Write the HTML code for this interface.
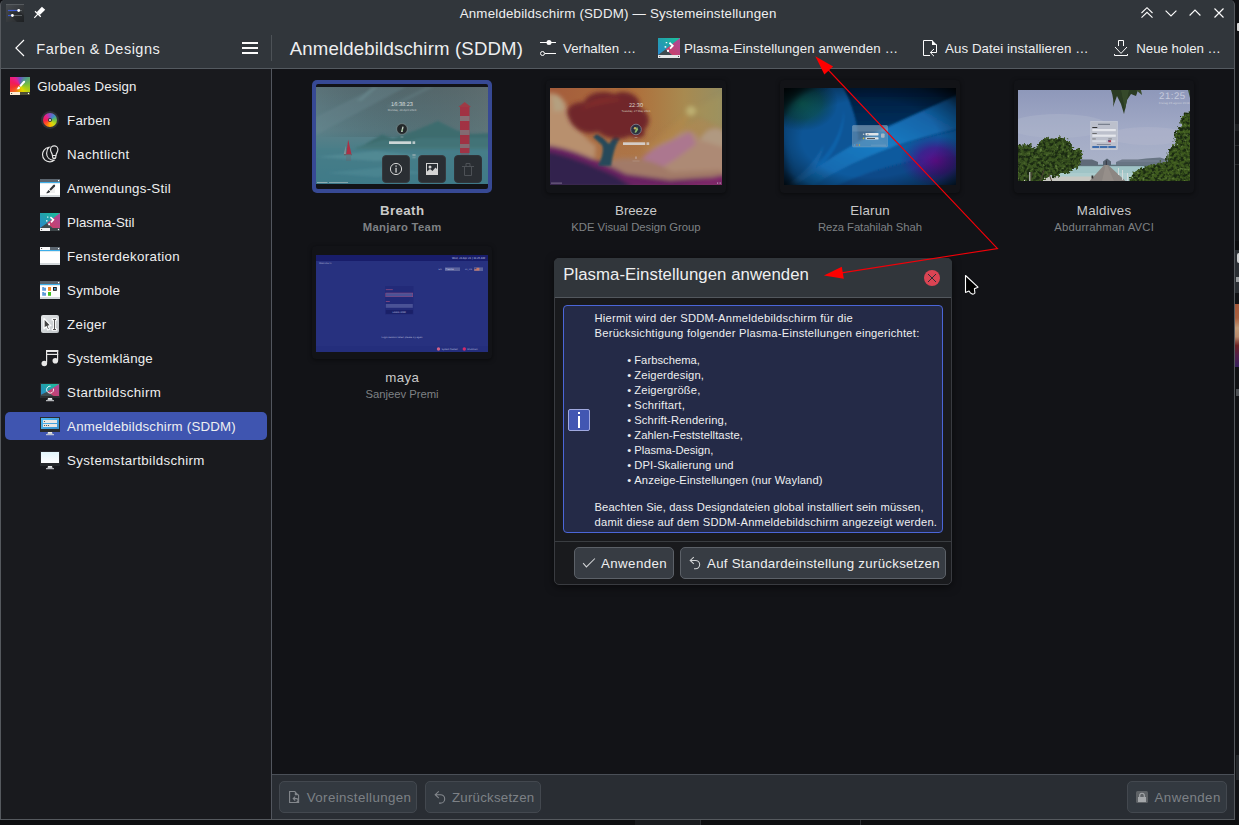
<!DOCTYPE html>
<html lang="de"><head><meta charset="utf-8"><title>Anmeldebildschirm (SDDM) — Systemeinstellungen</title>
<style>
*{margin:0;padding:0;box-sizing:border-box}
html,body{width:1239px;height:825px;overflow:hidden;background:#0e0f12}
body{font-family:"Liberation Sans",sans-serif}
#root{position:absolute;left:0;top:0;width:1239px;height:825px;overflow:hidden}
#root>*{position:absolute}
.a{position:absolute}
.g{position:absolute;left:0;top:0;width:0;height:0}
.t{position:absolute;line-height:20px;white-space:nowrap;font-family:"Liberation Sans",sans-serif}
svg{display:block;overflow:visible}
.btn{border:1px solid #5c6168;background:#373c43;border-radius:5px}
.dbtn{border:1px solid #43484f;background:#333940;border-radius:5px}
.card{background:#121317;border-radius:4px;box-shadow:0 1px 4px rgba(0,0,0,.5)}
svg text{text-rendering:geometricPrecision}

</style></head>
<body>
<div id="root">
<!-- window frame -->
<div id="win" style="left:0;top:0;width:1235px;height:820px;background:#31363b;border-radius:5px 5px 0 0;border:1px solid #55595e;border-top:none"></div>
<!-- sidebar -->
<div id="sidebar" style="left:1px;top:69px;width:270px;height:750px;background:#191a1e"></div>
<!-- content (dimmed by modal) -->
<div id="content" style="left:272px;top:69px;width:962px;height:705px;background:#121317"></div>
<!-- bottom bar -->
<div id="bottombar" style="left:272px;top:774px;width:962px;height:45px;background:#292d33;border-top:1px solid #4a4f57"></div>
<!-- separators -->
<div style="left:1px;top:68px;width:1233px;height:1px;background:#545a60"></div>
<div style="left:271px;top:69px;width:1px;height:750px;background:#52565e"></div>
<div style="left:271px;top:35px;width:1px;height:26px;background:#4d5257"></div>
<!-- selected sidebar item -->
<div style="left:5px;top:412px;width:262px;height:28px;background:#3f55b0;border-radius:5px"></div>
<!-- bottom bar buttons (disabled) -->
<div class="dbtn" style="left:279px;top:781px;width:138px;height:32px"></div>
<div class="dbtn" style="left:425px;top:781px;width:116px;height:32px"></div>
<div class="dbtn" style="left:1127px;top:781px;width:100px;height:32px"></div>

<!-- ===== theme grid cards ===== -->
<div class="card" style="left:546px;top:80px;width:180px;height:113px"></div>
<div class="card" style="left:780px;top:80px;width:180px;height:113px"></div>
<div class="card" style="left:1014px;top:80px;width:180px;height:113px"></div>
<div class="card" style="left:312px;top:246px;width:180px;height:113px"></div>
<!-- selected card (Breath) -->
<div style="left:312px;top:80px;width:180px;height:113px;background:#374994;border-radius:5px"></div>
<div style="left:316px;top:84px;width:172px;height:105px;background:#121317;border-radius:2px"></div>

<!-- Breath preview 172x97 @316,87 -->
<svg style="left:316px;top:87px" width="172" height="97" viewBox="0 0 172 97">
<defs>
<linearGradient id="brSky" x1="0" y1="0" x2="0" y2="1"><stop offset="0" stop-color="#5b7278"/><stop offset=".45" stop-color="#5d8088"/><stop offset=".62" stop-color="#4c7e88"/><stop offset="1" stop-color="#3c7888"/></linearGradient>
<linearGradient id="brR" x1="0" y1="0" x2="1" y2="0"><stop offset="0" stop-color="#000" stop-opacity="0"/><stop offset="1" stop-color="#60605c" stop-opacity=".35"/></linearGradient>
<filter id="b1" x="-10%" y="-10%" width="120%" height="120%"><feGaussianBlur stdDeviation="1.1"/></filter>
<filter id="b07a" x="-20%" y="-10%" width="140%" height="120%"><feGaussianBlur stdDeviation=".75"/></filter>
<filter id="b05" x="-10%" y="-10%" width="120%" height="120%"><feGaussianBlur stdDeviation=".5"/></filter>
<clipPath id="cBr"><rect width="172" height="97"/></clipPath>
</defs>
<g clip-path="url(#cBr)">
<rect width="172" height="97" fill="url(#brSky)"/>
<rect width="172" height="50" fill="url(#brR)"/>
<g filter="url(#b1)">
 <path d="M0 30L60 0H90L0 48Z" fill="#6a8a90" opacity=".35"/><path d="M40 14L56 0H62L46 14Z" fill="#6b8a90" opacity=".5"/><path d="M70 20L110 0H118L78 20Z" fill="#68858a" opacity=".35"/>
 <path d="M46 59L66 47.500L77 51.500L98 44L122 34L141 43.500L156 47L176 46V60H46Z" fill="#3c6c6e"/>
 <path d="M40 60L68 53L84 55L104 51L176 51V63H40Z" fill="#437679" opacity=".8"/>
 <path d="M0 62H172V97H0Z" fill="#3f7c8a" opacity=".5"/>
 <path d="M0 70L60 64L120 70L60 74Z" fill="#5e969e" opacity=".5"/>
 <path d="M10 86L70 80L110 86L60 90Z" fill="#5e969e" opacity=".35"/>
</g>
<g filter="url(#b07a)" opacity=".88">
 <rect x="144" y="20" width="9.5" height="46" fill="#ac2c3c"/>
 <rect x="144" y="29" width="9.5" height="5" fill="#8c7076"/><rect x="144" y="43" width="9.5" height="5" fill="#8c6a72"/><rect x="144" y="57" width="9.5" height="4" fill="#8c6a72"/>
 <path d="M142.5 20L148.7 15L155 20Z" fill="#a83440"/>
 <rect x="144.5" y="66" width="8.5" height="20" fill="#8a4452" opacity=".45"/>
 <path d="M30.200 67L32.200 52.500L35.400 67Z" fill="#b8283c"/><path d="M27.800 67L29.800 58.500V67Z" fill="#a8a0a0" opacity=".7"/>
 <rect x="28" y="67" width="8" height="1.300" fill="#6e5a60"/>
 <rect x="30" y="69" width="5" height="5" fill="#7a4a58" opacity=".25"/>
</g>
<!-- login ui -->
<text x="86" y="18.6" font-size="5.6" fill="#d8dcdc" text-anchor="middle">16:38:23</text>
<text x="86" y="23.6" font-size="2.9" fill="#c4caca" text-anchor="middle">Monday, 29 April 2024</text>
<circle cx="86" cy="42" r="5.4" fill="#23282a" stroke="#8a9a9c" stroke-width=".6"/>
<path d="M85 45L86.4 39.4L87.6 39.8L86.6 45Z" fill="#c8d4c8"/><path d="M85.4 43.6l1.2-1.6.4 1.8z" fill="#6fae5a"/>
<rect x="84.6" y="49.6" width="2.8" height=".8" fill="#aebabc" opacity=".7"/>
<rect x="73" y="54.3" width="22.2" height="2.7" fill="#cdd6d6"/><rect x="96.5" y="54.3" width="2.7" height="2.7" fill="#cdd6d6" opacity=".85"/>
<rect x="96.4" y="67" width="3.2" height="2.2" fill="#a8b6b8" opacity=".6"/><rect x="96.4" y="70.4" width="3.2" height=".8" fill="#a8b6b8" opacity=".5"/>
<rect x="1" y="95" width="10.5" height="1" fill="#b4c2c4" opacity=".7"/><rect x="13" y="95" width="19" height="1" fill="#b4c2c4" opacity=".6"/>
</g>
</svg>
<!-- hover action buttons on Breath -->
<div style="left:382px;top:155px;width:28px;height:28px;background:#2a2e33;border:1px solid #363a3f;border-radius:4px"></div>
<div style="left:418px;top:155px;width:28px;height:28px;background:#2a2e33;border:1px solid #363a3f;border-radius:4px"></div>
<div style="left:454px;top:155px;width:28px;height:28px;background:#2a2e33;border:1px solid #30343a;border-radius:4px"></div>
<svg style="left:382px;top:155px" width="100" height="28" viewBox="0 0 100 28">
<circle cx="14" cy="14" r="5.6" stroke="#d4d4d4" stroke-width="1" fill="none"/><rect x="13.4" y="10.4" width="1.3" height="1.3" fill="#d4d4d4"/><rect x="13.4" y="12.8" width="1.3" height="4.8" fill="#d4d4d4"/>
<rect x="44.5" y="8.5" width="11" height="11" stroke="#d4d4d4" stroke-width="1" fill="none"/><circle cx="48" cy="12" r="1.5" fill="#d4d4d4"/><path d="M45 19V16.5L48 14L50.5 16L53.5 12.5L55 14V19Z" fill="#d4d4d4"/>
<g stroke="#4d5156" stroke-width="1" fill="none"><path d="M80 11.500H92M82.500 11.500V20.500H89.500V11.500M84 11V8.500H88V11"/></g>
</svg>

<!-- Breeze preview 172x97 @550,88 -->
<svg style="left:550px;top:88px" width="172" height="97" viewBox="0 0 172 97">
<defs>
<linearGradient id="bzBg" x1="0" y1="0" x2="1" y2="0"><stop offset="0" stop-color="#a45c3c"/><stop offset=".5" stop-color="#ae703c"/><stop offset=".78" stop-color="#a88a50"/><stop offset="1" stop-color="#968e62"/></linearGradient>
<linearGradient id="bzLow" x1="0" y1="0" x2="0" y2="1"><stop offset="0" stop-color="#a8784e" stop-opacity="0"/><stop offset="1" stop-color="#b08058" stop-opacity=".9"/></linearGradient>
<filter id="b2" x="-20%" y="-20%" width="140%" height="140%"><feGaussianBlur stdDeviation="2.2"/></filter>
<filter id="b15" x="-20%" y="-20%" width="140%" height="140%"><feGaussianBlur stdDeviation="1.3"/></filter>
<clipPath id="cBz"><rect width="172" height="97"/></clipPath>
</defs>
<g clip-path="url(#cBz)">
<rect width="172" height="97" fill="url(#bzBg)"/>
<rect y="30" width="172" height="67" fill="url(#bzLow)"/>
<g filter="url(#b2)">
 <path d="M141 23L172 6V40Z" fill="#a89858" opacity=".35"/>
 <path d="M141 23L92 62L120 66Z" fill="#b88a48" opacity=".4"/>
 <circle cx="141" cy="23" r="5" fill="#c2b878" opacity=".8"/>
 <path d="M112 52L150 30L172 40V97H100Z" fill="#b48a52" opacity=".45"/>
 <path d="M-4 6C8 2 16 12 20 26C28 40 34 50 46 58L44 76L-4 70Z" fill="#b8906e"/>
 <path d="M2 8C10 6 14 14 14 22L4 24Z" fill="#b4a080"/>
 <path d="M96 70C104 54 118 56 126 48C134 40 146 42 150 52C158 36 176 36 178 54V92H100Z" fill="#ad8a74"/>
 <path d="M150 52C156 38 170 38 176 46V60Z" fill="#b09c84" opacity=".8"/>
 <path d="M92 70C104 58 122 54 140 44L146 56C134 64 120 78 100 84Z" fill="#ac7492" opacity=".9"/>
 <path d="M56 74C80 66 104 72 122 84L172 82V100H40Z" fill="#a27a68"/>
 <path d="M-4 57C20 60 48 72 76 86L120 92L176 88V100H-4Z" fill="#6a2462"/>
 <path d="M-4 63C14 66 40 76 66 88L84 100H-4Z" fill="#30204e"/>
 <path d="M128 97L176 86V100Z" fill="#7c2868"/>
</g>
<g filter="url(#b15)">
 <path d="M53 50L59 56L65 47L70 50C65 57 63 66 61 78L48 78C52 70 54 62 52 57L43 49L47 46Z" fill="#264a5a"/>
</g>
<g filter="url(#b2)">
 <path d="M18 28C14 18 26 14 34 14C38 4 54 2 64 6C76 0 92 8 90 20C100 24 102 36 94 42C98 50 86 52 80 48C70 54 54 50 48 44C36 48 22 42 18 28Z" fill="#70262a"/>
 <path d="M30 22C40 10 60 8 74 12C62 14 44 16 30 22Z" fill="#822e2c"/>
</g>
<text x="86" y="19.200" font-size="5.600" fill="#dcd4cc" text-anchor="middle">22:30</text>
<text x="86" y="24.200" font-size="2.900" fill="#cfc4b8" text-anchor="middle">Tuesday, 27 May 2021</text>
<circle cx="86" cy="41.500" r="5.300" fill="#2c3040" stroke="#8e94a4" stroke-width=".7"/>
<path d="M84.500 44.500L87 38.500L88.200 41.500L86 44.800Z" fill="#8ab86a"/><circle cx="85" cy="40.200" r="1.200" fill="#c8b060"/>
<rect x="84.600" y="49.200" width="2.800" height=".8" fill="#cbb" opacity=".6"/>
<rect x="73" y="54.300" width="22.200" height="2.700" fill="#d4ccc6"/><rect x="96.500" y="54.300" width="2.700" height="2.700" fill="#d4ccc6" opacity=".85"/>
<rect x="85" y="68.500" width="2" height="2.400" fill="#cbb" opacity=".45"/><rect x="82.500" y="72.600" width="7" height=".8" fill="#cbb" opacity=".35"/>
<rect x="1" y="94.600" width="11" height="1" fill="#b8a8c0" opacity=".55"/><rect x="167" y="94.300" width="1.200" height="1.600" fill="#c8b8d0" opacity=".6"/><rect x="169.500" y="94.300" width="1.500" height="1.600" fill="#c8b8d0" opacity=".5"/>
</g>
</svg>

<!-- Elarun preview 172x97 @784,88 -->
<svg style="left:784px;top:88px" width="172" height="97" viewBox="0 0 172 97">
<defs>
<radialGradient id="elTeal" cx=".5" cy=".5" r=".5"><stop offset="0" stop-color="#0e6660"/><stop offset=".55" stop-color="#0b4e54" stop-opacity=".8"/><stop offset="1" stop-color="#083a52" stop-opacity="0"/></radialGradient>
<radialGradient id="elPur" cx=".5" cy=".5" r=".5"><stop offset="0" stop-color="#5e0e8a"/><stop offset=".5" stop-color="#46168a" stop-opacity=".8"/><stop offset="1" stop-color="#2a2a88" stop-opacity="0"/></radialGradient>
<radialGradient id="elVig" cx=".5" cy=".52" r=".72"><stop offset=".55" stop-color="#000" stop-opacity="0"/><stop offset=".8" stop-color="#000" stop-opacity=".35"/><stop offset="1" stop-color="#000" stop-opacity=".92"/></radialGradient>
<linearGradient id="elSw" x1="0" y1="1" x2="1" y2="0"><stop offset="0" stop-color="#0e5ea2"/><stop offset=".5" stop-color="#1a7cc4"/><stop offset="1" stop-color="#0c4e8e"/></linearGradient>
<linearGradient id="elTop" x1="0" y1="0" x2="0" y2="1"><stop offset="0" stop-color="#021a38"/><stop offset="1" stop-color="#06386c"/></linearGradient>
<filter id="b08" x="-10%" y="-10%" width="120%" height="120%"><feGaussianBlur stdDeviation=".8"/></filter>
<filter id="b3" x="-20%" y="-20%" width="140%" height="140%"><feGaussianBlur stdDeviation="3"/></filter>
<clipPath id="cEl"><rect width="172" height="97"/></clipPath>
</defs>
<g clip-path="url(#cEl)">
<rect width="172" height="97" fill="#0a4c8c"/>
<g filter="url(#b08)">
 <path d="M58 -2H176V6C150 18 124 30 104 38C92 43 82 49 74 54C74 36 68 16 58 -2Z" fill="url(#elTop)"/>
 <path d="M6 99C30 80 56 64 74 54C92 44 124 30 176 6V40C150 46 120 54 96 64C70 74 44 88 28 99Z" fill="url(#elSw)"/>
 <path d="M28 99C50 84 76 72 100 63C126 54 150 48 176 42V68C140 68 100 76 50 99Z" fill="#0d5a9e"/>
 <path d="M50 99C96 78 140 70 176 69V99Z" fill="#0a4888"/>
 <path d="M-2 30L48 -2H58C68 16 74 36 74 54C52 66 26 82 6 99H-2Z" fill="#0c5496"/>
 <path d="M-2 99C30 86 58 56 60 20C62 56 40 84 6 99Z" fill="#1468b0" opacity=".7"/>
 <path d="M-2 99C14 90 30 76 40 56C36 80 22 92 6 99Z" fill="#1a70b4" opacity=".5"/>
</g>
<ellipse cx="18" cy="15" rx="36" ry="28" fill="url(#elTeal)"/>
<ellipse cx="152" cy="73" rx="36" ry="26" fill="url(#elPur)"/>
<rect width="172" height="97" fill="url(#elVig)"/>
<path d="M-6 -6H40C20 0 6 10 -6 40Z" fill="#000" opacity=".55" filter="url(#b3)"/>
<path d="M-6 40C0 60 2 80 12 103H-6Z" fill="#000" opacity=".4" filter="url(#b3)"/>
<!-- login box -->
<rect x="68.500" y="37.500" width="35" height="21.500" rx="1" fill="#7a9ab6" opacity=".55"/>
<rect x="68.500" y="37.500" width="35" height="21.500" rx="1" fill="none" stroke="#9ab4cc" stroke-width=".5" opacity=".6"/>
<rect x="68.500" y="37.500" width="35" height="6" fill="#a0b8cc" opacity=".25"/>
<rect x="81.500" y="45" width="13" height="2.400" rx=".6" fill="#dfe4e8"/><rect x="81.500" y="49.200" width="13" height="2.400" rx=".6" fill="#dfe4e8"/>
<rect x="83" y="50" width="8" height=".8" fill="#333"/><rect x="83" y="45.900" width="1.600" height=".6" fill="#555"/>
<rect x="97" y="45.500" width="3.600" height="4.200" rx=".8" fill="#a8b6c4"/>
<circle cx="79.600" cy="46.200" r=".8" fill="#c8d0d8"/><circle cx="79.600" cy="50.400" r=".8" fill="#d0b838"/>
<circle cx="70.500" cy="57" r=".7" fill="#60a0d0"/><circle cx="73" cy="57" r=".7" fill="#c06a50"/><circle cx="75.500" cy="57" r=".7" fill="#c0b040"/>
<rect x="87" y="56.800" width="15" height=".6" fill="#a8c0d4" opacity=".5"/>
</g>
</svg>

<!-- Maldives preview 172x91 @1018,90 -->
<svg style="left:1018px;top:90px" width="172" height="91" viewBox="0 0 172 91">
<defs>
<linearGradient id="mdSky" x1="0" y1="0" x2="0" y2="1"><stop offset="0" stop-color="#8e98ba"/><stop offset=".45" stop-color="#a2aac6"/><stop offset=".8" stop-color="#aab2c8"/><stop offset="1" stop-color="#a8b6c4"/></linearGradient>
<filter id="b07" x="-10%" y="-10%" width="120%" height="120%"><feGaussianBlur stdDeviation=".6"/></filter>
<filter id="leaf" x="-5%" y="-5%" width="110%" height="110%" color-interpolation-filters="sRGB">
 <feTurbulence type="fractalNoise" baseFrequency=".32" numOctaves="2" seed="7" result="n"/>
 <feDisplacementMap in="SourceGraphic" in2="n" scale="7" xChannelSelector="R" yChannelSelector="G" result="sh"/>
 <feColorMatrix in="n" type="matrix" values="0 0 0 0 .1  0 0 0 0 .16  0 0 0 0 .07  4 0 0 0 -1.7" result="dk"/>
 <feComposite in="dk" in2="sh" operator="in" result="dkin"/>
 <feColorMatrix in="n" type="matrix" values="0 0 0 0 .4  0 0 0 0 .52  0 0 0 0 .25  0 3.2 0 0 -1.9" result="lt"/>
 <feComposite in="lt" in2="sh" operator="in" result="ltin"/>
 <feMerge result="m"><feMergeNode in="sh"/><feMergeNode in="dkin"/><feMergeNode in="ltin"/></feMerge>
 <feGaussianBlur in="m" stdDeviation=".45"/>
</filter>
<clipPath id="cMd"><rect width="172" height="91"/></clipPath>
</defs>
<g clip-path="url(#cMd)">
<rect width="172" height="91" fill="url(#mdSky)"/>
<g filter="url(#b07)">
 <ellipse cx="40" cy="36" rx="50" ry="12" fill="#b0b6cc" opacity=".45"/>
 <ellipse cx="130" cy="46" rx="40" ry="9" fill="#b4bace" opacity=".4"/>
 <!-- sea and sand -->
 <rect x="40" y="75" width="100" height="16" fill="#a0c4c6"/>
 <rect x="40" y="83" width="100" height="8" fill="#b0d0d0" opacity=".7"/>
 <rect x="40" y="74.200" width="100" height="2" fill="#86a4ae"/>
 <path d="M0 86.500H78L74 91H0Z" fill="#c8c8c2"/>
 <!-- distant villas -->
 <path d="M56 72L60 69.500H74L80 72V75H56Z" fill="#5e6a78"/><path d="M85 71.500L89 68.500L93 71.500V75H85Z" fill="#566270"/>
 <path d="M98 72L104 69.500H120L128 68.500L142 67.500L150 70V75H98Z" fill="#687484"/>
 <path d="M100 71H148" stroke="#8a96a4" stroke-width=".8" opacity=".7"/>
 <rect x="58" y="75" width="84" height="1.100" fill="#4e5a64" opacity=".7"/>
 <!-- pier -->
 <path d="M86.200 75H90.200L107.500 91H71.500Z" fill="#8c8682"/>
 <path d="M87.600 75H89L96 91H84Z" fill="#9c9690" opacity=".6"/>
 <rect x="87.800" y="70.500" width="1" height="4.500" fill="#34363c"/>
 <path d="M104.500 80V90M109.500 83V91M100.500 78V85" stroke="#d8dcdc" stroke-width=".9"/>
 <rect x="73.500" y="85.500" width="1.800" height="3" fill="#333"/>
</g>
<!-- trees -->
<g filter="url(#leaf)">
 <path d="M-4 58C4 52 12 54 18 58C20 50 30 46 38 48C46 46 56 52 54 60C60 60 66 62 63 68C64 74 60 80 54 79L50 84L42 82L40 88L30 86L24 92H-4Z" fill="#3a5420"/>
 <path d="M56 62C58 56 66 58 64 66Z" fill="#3a5420"/>
 <path d="M176 20C166 22 160 28 163 35C157 40 155 48 158 54C150 58 148 66 150 72C140 72 128 76 120 80C114 83 110 88 112 93H176Z" fill="#3e5a1e"/>
</g>
<g filter="url(#b07)">
 <path d="M22 92L26 80M12 92L14 82M34 92L31 84" stroke="#4a4234" stroke-width="1" fill="none"/>
 <rect x="11" y="82" width="1.400" height="9" fill="#a8aca8"/>
 <!-- palm -->
 <path d="M93 0C95 6 96 12 95 17L99 6L103 14L106 24L109 10L113 4L118 6L120 0Z" fill="#2a3a20"/>
 <path d="M103 0L107 20L111 0Z" fill="#34482a"/><path d="M118 0L124 5L123 0Z" fill="#3a4c2c"/>
 <path d="M170 0L172 8V0Z" fill="#34482a"/>
</g>
<!-- login box -->
<rect x="72.800" y="31.500" width="26.500" height="28" fill="#bcc0cc" stroke="#d4d8e0" stroke-width=".5"/>
<rect x="80" y="33.800" width="12" height="1" fill="#555c6c" opacity=".8"/>
<rect x="74.300" y="37" width="5" height=".9" fill="#222"/><rect x="74.300" y="39" width="23.500" height="2.200" fill="#e4e6ec"/>
<rect x="74.300" y="43" width="4.500" height=".8" fill="#555"/><rect x="74.300" y="44.600" width="23.500" height="2.200" fill="#e4e6ec"/>
<rect x="74.300" y="48.600" width="3.500" height=".7" fill="#666"/><rect x="90.300" y="48.600" width="3.500" height=".7" fill="#666"/>
<rect x="74.300" y="50.200" width="14" height="2" fill="#d4d8e0"/><rect x="90.300" y="50.200" width="2.800" height="2" fill="#b03a4a"/><rect x="90.300" y="50.200" width="1.200" height="1" fill="#2c3c8c"/><rect x="93.300" y="50.200" width="4" height="2" fill="#d4d8e0"/>
<rect x="78.800" y="54" width="14" height=".7" fill="#4c5468" opacity=".7"/>
<rect x="74.300" y="56" width="7" height="2" fill="#3c6cac"/><rect x="82" y="56" width="7.500" height="2" fill="#3c6cac"/><rect x="90.300" y="56" width="7.500" height="2" fill="#3c6cac"/>
<text x="167.600" y="8.800" font-size="9.600" fill="#c6cbdc" text-anchor="end" letter-spacing=".5">21:25</text>
<text x="171.500" y="14" font-size="3" fill="#c8ccd8" text-anchor="end">Freitag 23 agosto 2019</text>
</g>
</svg>

<!-- maya preview 172x97 @316,255 -->
<svg style="left:316px;top:255px" width="172" height="97" viewBox="0 0 172 97">
<rect width="172" height="97" fill="#27317f"/>
<rect width="172" height="6" fill="#181d6a"/>
<rect y="91" width="172" height="6" fill="#242e7c"/>
<text x="169" y="3.600" font-size="2.800" fill="#c4c8e4" text-anchor="end">Wed, 21 Apr 21 | 11:25 AM</text>
<text x="3" y="9.200" font-size="2.400" fill="#b0b4d8">Welcome to</text>
<text x="122.500" y="15.200" font-size="2.300" fill="#aab0d8">EN</text>
<rect x="129" y="12.400" width="15" height="3.600" fill="#5a629c"/><text x="129.600" y="15.200" font-size="2.400" fill="#d0d4ec">Plasma</text>
<text x="149" y="15.200" font-size="2.300" fill="#aab0d8">en_US</text>
<rect x="158" y="12.400" width="9" height="3.600" fill="#5a629c"/><rect x="158.400" y="12.800" width="5" height="2.800" fill="#c87868"/><rect x="158.400" y="12.800" width="2" height="1.400" fill="#384890"/>
<rect x="69" y="31" width="28.500" height="28.500" fill="#222a78"/>
<rect x="69.800" y="34.400" width="7" height=".7" fill="#a05080"/>
<rect x="69.800" y="38" width="27" height="3.800" fill="#4a5296" stroke="#b04a78" stroke-width=".4"/>
<rect x="69.800" y="46.200" width="4" height=".7" fill="#a05080"/>
<rect x="69.800" y="49" width="27" height="3.800" fill="#4a5296"/>
<rect x="69.800" y="55" width="27" height="3.800" fill="#1a2068"/><text x="83.300" y="57.800" font-size="2.200" fill="#c0c4e0" text-anchor="middle">LOGIN HERE</text>
<text x="86" y="83.200" font-size="2.500" fill="#b4b8dc" text-anchor="middle">Login session failed, please try again</text>
<circle cx="122.500" cy="94" r="1.700" fill="#d06088"/><text x="125.400" y="94.800" font-size="2.400" fill="#b4b8dc">System Restart</text>
<circle cx="148.300" cy="94" r="1.700" fill="#d02a6a"/><text x="151" y="94.800" font-size="2.400" fill="#b4b8dc">Shutdown</text>
</svg>

<!-- modal dialog -->
<div id="dialog" style="left:554px;top:258px;width:398px;height:327px;background:#191a1d;border:1px solid #393b40;border-radius:5px;box-shadow:0 2px 8px rgba(0,0,0,.5)"></div>
<div style="left:554px;top:258px;width:398px;height:39px;background:#31363b;border-radius:5px 5px 0 0"></div>
<div style="left:555px;top:297px;width:396px;height:1px;background:#53585e"></div>
<div style="left:555px;top:541px;width:396px;height:1px;background:#3a3d41"></div>
<!-- inline message -->
<div style="left:563px;top:305px;width:380px;height:228px;background:#242a47;border:1px solid #4b66d8;border-radius:4px"></div>
<!-- info icon -->
<div style="left:568px;top:409px;width:22px;height:22px;background:#4257b2;border:1px solid #a0a9e0;border-radius:2px"></div>
<div style="left:578px;top:412px;width:2px;height:2px;background:#fff"></div>
<div style="left:578px;top:416px;width:2px;height:12px;background:#fff"></div>
<!-- close button -->
<svg style="left:924px;top:270px" width="16" height="16" viewBox="0 0 16 16"><circle cx="8" cy="8" r="8" fill="#da4453"/><path d="M4 4l8 8M12 4l-8 8" stroke="#2c3036" stroke-width="1" fill="none"/></svg>
<!-- buttons -->
<div class="btn" style="left:574px;top:547px;width:100px;height:32px"></div>
<div class="btn" style="left:680px;top:547px;width:266px;height:32px"></div>

<!-- conic gradient icons (CSS) -->
<div style="left:10px;top:77px;width:20px;height:15px;background:conic-gradient(from 0deg at 50% 55%,#6f50c4 0deg,#4f9a8c 40deg,#6fb84a 75deg,#a4cc1c 110deg,#dcd800 150deg,#e8b400 185deg,#f0701c 215deg,#f23030 255deg,#f01a5c 290deg,#e8208c 325deg,#6f50c4 360deg)"></div>
<div style="left:10px;top:92px;width:10px;height:3px;background:#fdebd2"></div>
<div style="left:20px;top:92px;width:10px;height:3px;background:#4e4e36"></div>
<div style="left:41px;top:111px;width:18px;height:18px;border-radius:50%;background:#2f3236"></div>
<div style="left:43px;top:113px;width:14px;height:14px;border-radius:50%;background:conic-gradient(#8452c4 0deg,#3c8cc4 45deg,#5cb860 80deg,#8cc832 105deg,#d0dc10 140deg,#ffb400 180deg,#ff5a1e 225deg,#f4204c 265deg,#e6208c 315deg,#8452c4 360deg)"></div>
<div style="left:47.7px;top:117.7px;width:4.6px;height:4.6px;border-radius:50%;background:#33363b"></div>
<div style="left:49px;top:119.2px;width:2px;height:1.8px;border-radius:40%;background:#d8d8dc"></div>

<svg id="ico" style="left:0;top:0" width="1239" height="825" viewBox="0 0 1239 825">
<defs>
<linearGradient id="gTeal" x1="1" y1="0" x2="0" y2="1"><stop offset="0" stop-color="#1bc49a"/><stop offset=".5" stop-color="#22a0ac"/><stop offset="1" stop-color="#2a8ad0"/></linearGradient>
<linearGradient id="gMag" x1="1" y1="0" x2="0" y2="1"><stop offset="0" stop-color="#ab4a9c"/><stop offset="1" stop-color="#d03e5c"/></linearGradient>
<linearGradient id="gApp" x1="0" y1="0" x2="1" y2="1"><stop offset="0" stop-color="#484c50"/><stop offset="1" stop-color="#26292c"/></linearGradient>
<linearGradient id="gSky" x1="0" y1="0" x2="1" y2="1"><stop offset="0" stop-color="#52bdf8"/><stop offset="1" stop-color="#3890cc"/></linearGradient>
<linearGradient id="gScr" x1="0" y1="0" x2="0" y2="1"><stop offset="0" stop-color="#e2f6fc"/><stop offset="1" stop-color="#ffffff"/></linearGradient>
<linearGradient id="gCur" x1="0" y1="0" x2="1" y2="1"><stop offset="0" stop-color="#e2e5e7"/><stop offset="1" stop-color="#bfc4c7"/></linearGradient>
<linearGradient id="gStand" x1="0" y1="0" x2="0" y2="1"><stop offset="0" stop-color="#f4f5f5"/><stop offset="1" stop-color="#b9bdc0"/></linearGradient>
<!-- plasma style glyph, 20x18 box -->
<g id="plasma20">
 <rect x="0" y="0" width="20" height="15" fill="url(#gTeal)"/>
 <path d="M20 0V15H12.6L6.8 10.2Z" fill="url(#gMag)"/>
 <path d="M0 15L6.8 10.2L12.6 15Z" fill="#3f4b4f"/>
 <path d="M10.4 4.2L13.4 6.8L11 9.4" stroke="#fff" stroke-width="1.6" fill="none"/>
 <rect x="7" y="3.6" width="1.4" height="1" fill="#fff"/><rect x="6" y="7.2" width="1.5" height="1.3" fill="#fff"/><rect x="8.2" y="10.4" width="1.8" height="1.8" fill="#fff"/>
</g>
<g id="stand"><path d="M8 0h4l.6 2.2h-5.2z" fill="url(#gStand)"/><rect x="6" y="2.2" width="8" height="1" fill="#d5d8da"/></g>
<g id="winframe">
 <rect x="0" y="0" width="20" height="18" fill="#fff"/>
 <rect x="0" y="0" width="20" height="3" fill="#5b656f"/>
 <rect x="0" y="3" width="20" height="1.3" fill="#3daee9"/>
 <rect x="0" y="4.3" width="20" height=".6" fill="#f3ece8"/>
 <rect x="0" y="16" width="20" height="2" fill="#d3d8db"/>
 <rect x="18" y="1" width="1.2" height="1.2" fill="#fff"/>
</g>
</defs>

<!-- titlebar: app icon -->
<rect x="6" y="4" width="18" height="18" fill="url(#gApp)"/>
<rect x="6" y="4" width="18" height="1" fill="#5d6165" opacity=".8"/>
<path d="M18.700 10.500L24 15.800V22H17L10 15.500H12.400L9 12Z" fill="#000" opacity=".2"/>
<path d="M8 10.5H18" stroke="#3c59d0" stroke-width="1.2"/><path d="M19.5 10.5H22" stroke="#6a6e72" stroke-width=".8"/>
<path d="M8 15.5H12" stroke="#3c59d0" stroke-width="1.2"/><path d="M13 15.5H22" stroke="#6a6e72" stroke-width=".8"/>
<circle cx="18.7" cy="10.5" r="1.4" fill="#fff"/><circle cx="12.4" cy="15.5" r="1.4" fill="#fff"/>
<!-- pin -->
<path d="M41.9 6.7L45.2 9.7L39.8 15L36.7 12.2Z" fill="#fff"/>
<path d="M35 11.3L40.8 16.7M37.8 14.2L34.3 17.8" stroke="#fff" stroke-width="1.2" fill="none"/>
<!-- window buttons -->
<g stroke="#fcfcfc" stroke-width="1.15" fill="none">
<path d="M1141.5 13L1147 7.7L1152.5 13M1141.5 17.6L1147 12.3L1152.5 17.6"/>
<path d="M1165.6 10.6L1171 16L1176.4 10.6"/>
<path d="M1189.6 15.5L1195 10.1L1200.4 15.5"/>
<path d="M1214.5 8.5L1223.5 17.5M1223.5 8.5L1214.5 17.5"/>
<!-- back chevron -->
<path d="M24 40L15.9 48L24 56"/>
</g>
<!-- hamburger -->
<rect x="242" y="42" width="16" height="2" fill="#fcfcfc"/><rect x="242" y="47" width="16" height="2" fill="#fcfcfc"/><rect x="242" y="52" width="16" height="2" fill="#fcfcfc"/>
<!-- toolbar: Verhalten (configure) -->
<g stroke="#fcfcfc" stroke-width="1" fill="none">
<path d="M540 42.5H556M545 53.5H556"/><circle cx="542.5" cy="53.5" r="2"/>
</g>
<circle cx="549" cy="42.5" r="2.5" fill="#fcfcfc"/>
<!-- toolbar: plasma icon 22x20 -->
<g transform="translate(658 38) scale(1.1 1.1333)"><use href="#plasma20"/></g>
<rect x="658" y="55" width="22" height="3" fill="#e4e7e8"/><rect x="659.2" y="56" width="1" height="1" fill="#555"/><rect x="678" y="56" width="1" height="1" fill="#444"/>
<!-- toolbar: install from file -->
<g stroke="#fcfcfc" stroke-width="1" fill="none">
<path d="M930 55.5H923.5V40.5H932.5"/><path d="M936.5 44.5V52.5H930.5"/><path d="M934 49L930.3 52.5L934 56.2"/>
</g>
<path d="M932 40L937 45H932Z" fill="#fcfcfc"/>
<!-- toolbar: get new -->
<g stroke="#fcfcfc" stroke-width="1" fill="none">
<path d="M1118.5 46V40.5H1123.5V46"/><path d="M1115 47L1121 53.4L1127 47"/><path d="M1114.5 54V55.5H1127.5V54"/>
</g>

<!-- sidebar: Globales Design brush + dots -->
<path d="M16.400 89C17.600 88.700 17.500 87.200 18.700 86.200L20.300 87.700C19.400 89.200 17.800 89.500 16.400 89Z" fill="#fff"/><path d="M19.400 85.500L23.400 81.100Q24.300 80.400 24.900 81.100Q25.400 81.800 24.800 82.500L20.800 86.900Z" fill="#fff"/>
<circle cx="11.6" cy="93.5" r=".6" fill="#333"/><circle cx="28.5" cy="93.5" r=".7" fill="#fff"/>
<!-- Nachtlicht -->
<g stroke="#e6e6e6" stroke-width="1.150" fill="none">
<path d="M49 147.3C44.5 148 42.5 151.6 42.5 154.5C42.5 159 46 161.8 49.8 161.8C51.5 161.8 53 161.3 54 160.4C49.5 160 46.6 157 46.6 153.2C46.6 150.5 47.5 148.6 49 147.3Z"/>
<path d="M52.4 155.5C52.4 153.4 50.5 152.2 50.5 149.5A3.7 3.7 0 0 1 57.9 149.5C57.9 152.2 56 153.4 56 155.5Z"/>
<path d="M52.6 155.5V157.3Q52.6 158.6 54.2 158.6Q55.8 158.6 55.8 157.3V155.5"/>
</g>
<path d="M53.2 157.6H55.2V158.4H53.2Z" fill="#e6e6e6"/>
<!-- Anwendungs-Stil -->
<g transform="translate(40 179)"><use href="#winframe"/>
<path d="M6 14C7.400 13.700 7.300 12 8.600 11L10.200 12.600C9.300 14.200 7.500 14.600 6 14Z" fill="#303438"/><path d="M9.300 10.200L13.300 5.900Q14.200 5.200 14.900 5.900Q15.500 6.600 14.900 7.400L10.800 11.700Z" fill="#303438"/><path d="M11 12L15 8V14H9Z" fill="#000" opacity=".06"/></g>
<!-- Plasma-Stil -->
<g transform="translate(40 213)"><use href="#plasma20"/><rect x="0" y="15" width="10" height="3" fill="#f2f2f2"/><rect x="10" y="15" width="10" height="3" fill="#3d4548"/><circle cx="1.6" cy="16.5" r=".6" fill="#333"/><circle cx="18.5" cy="16.5" r=".7" fill="#fff"/></g>
<!-- Fensterdekoration -->
<g transform="translate(40 247)"><use href="#winframe"/><rect x="0" y="0" width="10" height="3" fill="#fbfbfb"/><circle cx="1.6" cy="1.5" r=".6" fill="#333"/></g>
<!-- Symbole -->
<g transform="translate(40 281)"><use href="#winframe"/>
<path d="M2.2 6h1.6l.6.8h1.6v3H2.2z" fill="#5c9bd8"/><path d="M2.2 11h1.6l.6.8h1.6v3H2.2z" fill="#5c9bd8"/>
<rect x="8" y="6" width="3" height="3.8" fill="#f67400" opacity=".85"/><rect x="8" y="11" width="3" height="3.8" fill="#3fbf1f"/>
<rect x="13" y="6" width="3.8" height="3.8" fill="#1d1d1d"/><rect x="14" y="7" width="1.8" height="1.8" fill="#4aa0d8"/></g>
<!-- Zeiger -->
<rect x="41" y="315" width="18" height="18" rx="2" fill="url(#gCur)"/>
<path d="M44 318.400V328.800L46.300 326.800L47.800 330L49.600 329.200L48.200 326.100L50.900 325.600Z" fill="#444" stroke="#fff" stroke-width="1.300" stroke-linejoin="round"/>
<path d="M52.8 319.5H56.2M54.5 319.5V329.5M52.8 329.5H56.2" stroke="#fff" stroke-width="2.6" stroke-linecap="round" fill="none"/>
<path d="M53 319.5H56M54.5 319.5V329.5M53 329.5H56" stroke="#454545" stroke-width=".9" fill="none"/>
<!-- Systemklaenge -->
<g fill="#e8e8e8"><rect x="46" y="350" width="12.2" height="2"/><rect x="46" y="353.8" width="12.2" height="1.2"/><rect x="46" y="350" width="1.2" height="12.6"/><rect x="57" y="350" width="1.2" height="10.5"/><circle cx="44.3" cy="363.5" r="2.8"/><circle cx="55.3" cy="360.8" r="2.8"/></g>
<!-- Startbildschirm -->
<rect x="40" y="383" width="20" height="15" fill="#2a2d30"/>
<g transform="translate(41 384) scale(.9 .8)"><rect x="0" y="0" width="20" height="15" fill="url(#gTeal)"/><path d="M20 0V15H13L6.8 9.8Z" fill="url(#gMag)"/><path d="M0 13.5L6.8 9.8L14 15H0Z" fill="#3f4b4f"/></g>
<path d="M50.6 386.2A3.5 3.5 0 1 0 53.4 388.6" stroke="#fff" stroke-width=".9" fill="none"/>
<g transform="translate(40 398)"><use href="#stand"/></g>
<!-- Anmeldebildschirm -->
<rect x="40" y="417" width="20" height="15" fill="#2a2c2e"/><rect x="41" y="418" width="18" height="11" fill="url(#gSky)"/>
<rect x="43" y="420" width="14" height="3" fill="#e8e8e6"/><rect x="43" y="424" width="14" height="3" fill="#e8e8e6"/>
<circle cx="44.5" cy="421.5" r=".6" fill="#444"/><circle cx="44.5" cy="425.5" r=".6" fill="#444"/><circle cx="46.5" cy="425.5" r=".6" fill="#444"/><circle cx="48.5" cy="425.5" r=".6" fill="#444"/>
<g transform="translate(40 432)"><use href="#stand"/></g>
<!-- Systemstartbildschirm -->
<rect x="40" y="451" width="20" height="15" fill="#26292c"/><rect x="41" y="452" width="18" height="11" fill="url(#gScr)"/>
<g transform="translate(40 466)"><use href="#stand"/></g>

<!-- dialog button icons -->
<g stroke="#d2d4d6" stroke-width="1.050" fill="none">
<path d="M583.100 563.200L586.400 566.900L594.900 558.500"/>
<path d="M693.800 557.100L690.200 560.400L693.800 563.900M690.200 560.400H695.500A4.200 4.200 0 0 1 695.500 568.800H694"/>
</g>
<!-- bottom bar icons (disabled) -->
<g stroke="#84888d" stroke-width="1.100" fill="none">
<path d="M438.800 791.400L435.200 794.700L438.800 798.200M435.200 794.700H440.500A4.200 4.200 0 0 1 440.500 803.100H439"/>
<path d="M295.300 791.500H289.600V802.500H298.600V794.800"/>
<path d="M295.200 796.600L293.200 798.600L295.200 800.600M293.200 798.600H296.400A1.700 1.700 0 0 1 296.400 802"/>
</g>
<path d="M294.800 790.900L299.200 795.300H294.800Z" fill="#84888d"/>
<rect x="1136" y="791" width="12" height="12" rx="1.500" fill="#5e6266"/>
<rect x="1138" y="797" width="8" height="5" fill="#a4a7aa"/>
<path d="M1139.700 797V795.600A2.300 2.300 0 0 1 1144.300 795.600V797" stroke="#a4a7aa" stroke-width="1.100" fill="none"/>
</svg>

<!-- text -->
<header id="titlebar-text" class="g">
<span class="t" style="left:459.70px;top:4px;font-size:13.3px;color:#eeeff0;letter-spacing:0.204px;">Anmeldebildschirm (SDDM) — Systemeinstellungen</span>
</header>
<div id="toolbar-text" class="g">
<span class="t" style="left:36.30px;top:39px;font-size:14.5px;color:#eeeff0;letter-spacing:0.490px;">Farben &amp; Designs</span>
<span class="t" style="left:289.80px;top:39px;font-size:18.6px;color:#eeeff0;letter-spacing:0.163px;">Anmeldebildschirm (SDDM)</span>
<span class="t" style="left:563.00px;top:39px;font-size:13.3px;color:#eeeff0;letter-spacing:-0.010px;">Verhalten …</span>
<span class="t" style="left:684.00px;top:39px;font-size:13.3px;color:#eeeff0;letter-spacing:0.110px;">Plasma-Einstellungen anwenden …</span>
<span class="t" style="left:945.00px;top:39px;font-size:13.3px;color:#eeeff0;letter-spacing:0.068px;">Aus Datei installieren …</span>
<span class="t" style="left:1136.20px;top:39px;font-size:13.3px;color:#eeeff0;letter-spacing:-0.025px;">Neue holen …</span>
</div>
<nav id="sidebar-text" class="g">
<span class="t" style="left:37.20px;top:77px;font-size:13.3px;color:#eeeff0;letter-spacing:0.122px;">Globales Design</span>
<span class="t" style="left:67.10px;top:111px;font-size:13.3px;color:#eeeff0;letter-spacing:0.177px;">Farben</span>
<span class="t" style="left:67.10px;top:145px;font-size:13.3px;color:#eeeff0;letter-spacing:0.422px;">Nachtlicht</span>
<span class="t" style="left:67.10px;top:179px;font-size:13.3px;color:#eeeff0;letter-spacing:0.269px;">Anwendungs-Stil</span>
<span class="t" style="left:67.10px;top:213px;font-size:13.3px;color:#eeeff0;letter-spacing:0.006px;">Plasma-Stil</span>
<span class="t" style="left:67.10px;top:247px;font-size:13.3px;color:#eeeff0;letter-spacing:0.340px;">Fensterdekoration</span>
<span class="t" style="left:67.10px;top:281px;font-size:13.3px;color:#eeeff0;letter-spacing:0.175px;">Symbole</span>
<span class="t" style="left:67.10px;top:315px;font-size:13.3px;color:#eeeff0;letter-spacing:0.271px;">Zeiger</span>
<span class="t" style="left:67.10px;top:349px;font-size:13.3px;color:#eeeff0;letter-spacing:0.193px;">Systemklänge</span>
<span class="t" style="left:67.10px;top:383px;font-size:13.3px;color:#eeeff0;letter-spacing:0.420px;">Startbildschirm</span>
<span class="t" style="left:67.10px;top:417px;font-size:13.3px;color:#eeeff0;letter-spacing:0.202px;">Anmeldebildschirm (SDDM)</span>
<span class="t" style="left:67.10px;top:451px;font-size:13.3px;color:#eeeff0;letter-spacing:0.365px;">Systemstartbildschirm</span>
</nav>
<main id="grid-text" class="g">
<span class="t" style="left:379.95px;top:201px;font-size:13.3px;color:#c9c9c9;letter-spacing:0.395px;font-weight:700;">Breath</span>
<span class="t" style="left:362.82px;top:217px;font-size:11.3px;color:#7e8184;letter-spacing:0.295px;font-weight:700;">Manjaro Team</span>
<span class="t" style="left:615.10px;top:201px;font-size:13.3px;color:#c9c9c9;letter-spacing:-0.070px;">Breeze</span>
<span class="t" style="left:571.34px;top:217px;font-size:11.3px;color:#7e8184;letter-spacing:-0.021px;">KDE Visual Design Group</span>
<span class="t" style="left:850.23px;top:201px;font-size:13.3px;color:#c9c9c9;letter-spacing:0.222px;">Elarun</span>
<span class="t" style="left:818.04px;top:217px;font-size:11.3px;color:#7e8184;letter-spacing:-0.089px;">Reza Fatahilah Shah</span>
<span class="t" style="left:1076.86px;top:201px;font-size:13.3px;color:#c9c9c9;letter-spacing:0.259px;">Maldives</span>
<span class="t" style="left:1054.15px;top:217px;font-size:11.3px;color:#7e8184;letter-spacing:0.213px;">Abdurrahman AVCI</span>
<span class="t" style="left:385.22px;top:368px;font-size:13.3px;color:#c9c9c9;letter-spacing:0.351px;">maya</span>
<span class="t" style="left:365.38px;top:384px;font-size:11.3px;color:#7e8184;letter-spacing:-0.019px;">Sanjeev Premi</span>
</main>
<section id="dialog-text" class="g">
<span class="t" style="left:563.20px;top:265px;font-size:16.8px;color:#eeeff0;letter-spacing:0.047px;">Plasma-Einstellungen anwenden</span>
<span class="t" style="left:594.50px;top:308px;font-size:11.2px;color:#eeeff0;letter-spacing:0.249px;">Hiermit wird der SDDM-Anmeldebildschirm für die</span>
<span class="t" style="left:594.50px;top:323px;font-size:11.2px;color:#eeeff0;letter-spacing:0.241px;">Berücksichtigung folgender Plasma-Einstellungen eingerichtet:</span>
<span class="t" style="left:627.30px;top:350px;font-size:11.2px;color:#eeeff0;">•</span>
<span class="t" style="left:634.25px;top:350px;font-size:11.2px;color:#eeeff0;letter-spacing:0.039px;">Farbschema,</span>
<span class="t" style="left:627.30px;top:365px;font-size:11.2px;color:#eeeff0;">•</span>
<span class="t" style="left:634.25px;top:365px;font-size:11.2px;color:#eeeff0;letter-spacing:0.160px;">Zeigerdesign,</span>
<span class="t" style="left:627.30px;top:380px;font-size:11.2px;color:#eeeff0;">•</span>
<span class="t" style="left:634.25px;top:380px;font-size:11.2px;color:#eeeff0;letter-spacing:0.188px;">Zeigergröße,</span>
<span class="t" style="left:627.30px;top:395px;font-size:11.2px;color:#eeeff0;">•</span>
<span class="t" style="left:634.25px;top:395px;font-size:11.2px;color:#eeeff0;letter-spacing:0.266px;">Schriftart,</span>
<span class="t" style="left:627.30px;top:410px;font-size:11.2px;color:#eeeff0;">•</span>
<span class="t" style="left:634.25px;top:410px;font-size:11.2px;color:#eeeff0;letter-spacing:0.157px;">Schrift-Rendering,</span>
<span class="t" style="left:627.30px;top:425px;font-size:11.2px;color:#eeeff0;">•</span>
<span class="t" style="left:634.25px;top:425px;font-size:11.2px;color:#eeeff0;letter-spacing:0.083px;">Zahlen-Feststelltaste,</span>
<span class="t" style="left:627.30px;top:440px;font-size:11.2px;color:#eeeff0;">•</span>
<span class="t" style="left:634.25px;top:440px;font-size:11.2px;color:#eeeff0;letter-spacing:0.019px;">Plasma-Design,</span>
<span class="t" style="left:627.30px;top:455px;font-size:11.2px;color:#eeeff0;">•</span>
<span class="t" style="left:634.25px;top:455px;font-size:11.2px;color:#eeeff0;letter-spacing:0.137px;">DPI-Skalierung und</span>
<span class="t" style="left:627.30px;top:470px;font-size:11.2px;color:#eeeff0;">•</span>
<span class="t" style="left:634.25px;top:470px;font-size:11.2px;color:#eeeff0;letter-spacing:0.117px;">Anzeige-Einstellungen (nur Wayland)</span>
<span class="t" style="left:594.50px;top:497px;font-size:11.2px;color:#eeeff0;letter-spacing:0.140px;">Beachten Sie, dass Designdateien global installiert sein müssen,</span>
<span class="t" style="left:594.50px;top:512px;font-size:11.2px;color:#eeeff0;letter-spacing:0.219px;">damit diese auf dem SDDM-Anmeldebildschirm angezeigt werden.</span>
<span class="t" style="left:601.00px;top:554px;font-size:13.3px;color:#eeeff0;letter-spacing:0.406px;">Anwenden</span>
<span class="t" style="left:707.00px;top:554px;font-size:13.3px;color:#eeeff0;letter-spacing:0.270px;">Auf Standardeinstellung zurücksetzen</span>
</section>
<footer id="footer-text" class="g">
<span class="t" style="left:306.75px;top:788px;font-size:13.3px;color:#7d8186;letter-spacing:0.394px;">Voreinstellungen</span>
<span class="t" style="left:452.00px;top:788px;font-size:13.3px;color:#7d8186;letter-spacing:0.222px;">Zurücksetzen</span>
<span class="t" style="left:1154.60px;top:788px;font-size:13.3px;color:#7d8186;letter-spacing:0.406px;">Anwenden</span>
</footer>
<!-- neighbouring window peeking out at the right edge -->
<div style="left:1235px;top:0;width:4px;height:820px;background:#101114"></div>
<div style="left:1235px;top:124px;width:4px;height:7px;background:#1d1f22"></div>
<div style="left:1235px;top:145px;width:4px;height:1px;background:#26282b"></div>
<div style="left:1235px;top:164px;width:4px;height:1px;background:#26282b"></div>
<div style="left:1237px;top:23px;width:2px;height:8px;background:#d8d8d8;border-radius:1px 0 0 1px"></div>
<div style="left:1235px;top:241px;width:4px;height:9px;background:#0b0c0e"></div>
<div style="left:1235px;top:250px;width:4px;height:43px;background:#2a2e33"></div>
<div style="left:1237px;top:253px;width:2px;height:10px;background:#d0d2d4;border-radius:2px 0 0 2px"></div>
<div style="left:1236px;top:277px;width:3px;height:5px;background:#9a9da0"></div>
<div style="left:1235px;top:304px;width:4px;height:63px;background:linear-gradient(#a4583a 0,#a86040 22%,#c09a78 38%,#b88a6c 52%,#6c2224 66%,#52204a 82%,#37205c 100%)"></div>
<div style="left:1236px;top:389px;width:3px;height:7px;background:#4c4f53"></div>
<div style="left:1236px;top:755px;width:3px;height:25px;background:#24272b"></div>
<!-- desktop strip under the window -->
<div style="left:0;top:820px;width:1239px;height:5px;background:#0d0e10"></div>
<div style="left:635px;top:820px;width:65px;height:5px;background:#191b1e"></div>
<div style="left:700px;top:820px;width:1px;height:5px;background:#2c2f33"></div>
<div style="left:860px;top:820px;width:1px;height:5px;background:#2c2f33"></div>
<!-- annotation arrows + mouse pointer -->
<svg style="left:0;top:0" width="1239" height="825" viewBox="0 0 1239 825">
<path d="M826 67.500L997.500 248.500L840 273.100" stroke="#f20008" stroke-width="1.100" fill="none" stroke-linejoin="miter"/>
<path d="M815.300 56.200L833.100 66.600L824.400 74.600Z" fill="#ff0000"/>
<path d="M823.900 275.600L841.800 266.700L843.800 278.700Z" fill="#ff0000"/>
<path d="M965.500 275.500L978 287.200L974.400 288.800L974.900 293Q973 295.300 970.400 292.800L969 291L965.500 292.400Z" fill="#000" stroke="#fff" stroke-width="1.100" stroke-linejoin="round"/>
</svg>

</div>
</body></html>
